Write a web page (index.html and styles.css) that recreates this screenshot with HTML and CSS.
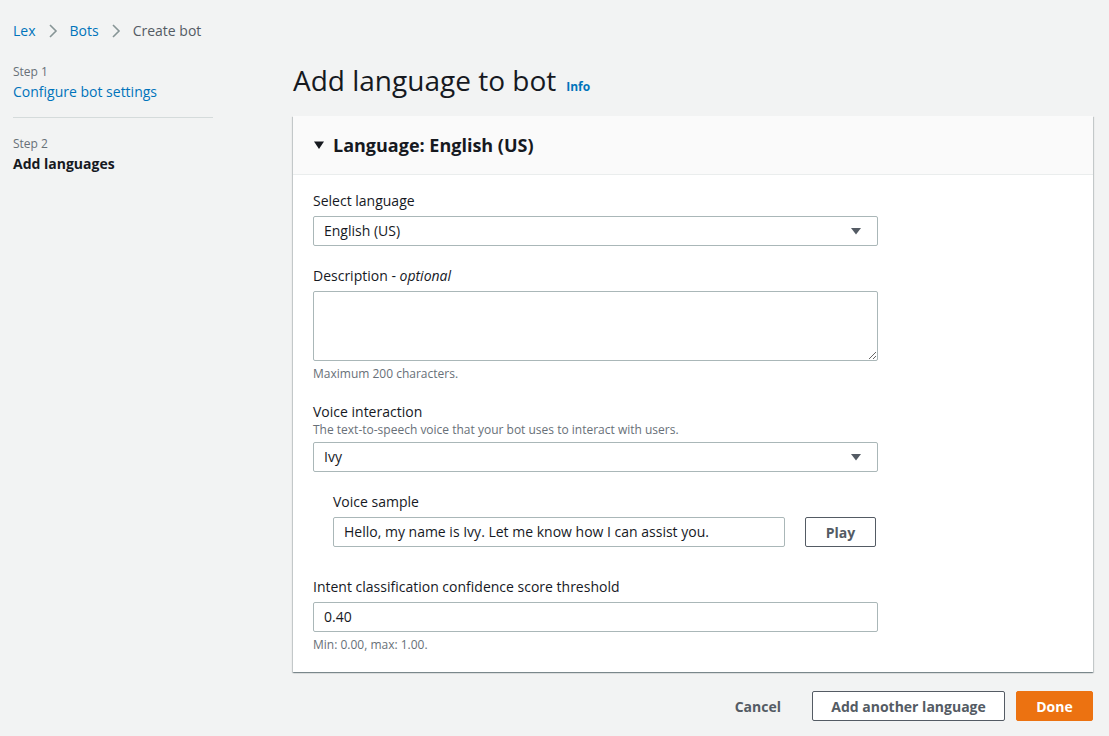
FILE: index.html
```html
<!DOCTYPE html>
<html lang="en">
<head>
<meta charset="utf-8">
<title>Add language to bot</title>
<link rel="stylesheet" href="styles.css">
</head>
<body>
<nav class="crumbs">
  <a class="crumb-link" href="#">Lex</a>
  <svg class="chev" width="10" height="16" viewBox="0 0 10 16"><polyline points="2,2 8,8 2,14" fill="none" stroke="#879596" stroke-width="1.6"/></svg>
  <a class="crumb-link" href="#">Bots</a>
  <svg class="chev" width="10" height="16" viewBox="0 0 10 16"><polyline points="2,2 8,8 2,14" fill="none" stroke="#879596" stroke-width="1.6"/></svg>
  <span class="crumb-current">Create bot</span>
</nav>
<div class="layout">
  <aside class="steps">
    <div class="step">
      <div class="step-num">Step 1</div>
      <a class="step-link" href="#">Configure bot settings</a>
    </div>
    <div class="step-divider"></div>
    <div class="step">
      <div class="step-num">Step 2</div>
      <div class="step-active">Add languages</div>
    </div>
  </aside>
  <main class="main">
    <h1 class="title">Add language to bot <a class="info" href="#">Info</a></h1>
    <section class="panel">
      <header class="panel-head">
        <svg class="caret-down" width="12" height="10" viewBox="0 0 12 10"><polygon points="1,1.5 11,1.5 6,9" fill="#16191f"/></svg>
        <span>Language: English (US)</span>
      </header>
      <div class="panel-body">
        <div class="field">
          <div class="label">Select language</div>
          <div class="select">
            <span>English (US)</span>
            <svg width="12" height="10" viewBox="0 0 12 10"><polygon points="1,2 11,2 6,8.5" fill="#545b64"/></svg>
          </div>
        </div>
        <div class="field">
          <div class="label">Description - <i>optional</i></div>
          <textarea class="textarea"></textarea>
          <div class="hint">Maximum 200 characters.</div>
        </div>
        <div class="field">
          <div class="label">Voice interaction</div>
          <div class="desc">The text-to-speech voice that your bot uses to interact with users.</div>
          <div class="select">
            <span>Ivy</span>
            <svg width="12" height="10" viewBox="0 0 12 10"><polygon points="1,2 11,2 6,8.5" fill="#545b64"/></svg>
          </div>
        </div>
        <div class="sample">
          <div class="label">Voice sample</div>
          <div class="sample-row">
            <div class="input sample-input">Hello, my name is Ivy. Let me know how I can assist you.</div>
            <button class="btn btn-play">Play</button>
          </div>
        </div>
        <div class="field">
          <div class="label">Intent classification confidence score threshold</div>
          <div class="input">0.40</div>
          <div class="hint">Min: 0.00, max: 1.00.</div>
        </div>
      </div>
    </section>
    <div class="actions">
      <button class="btn-link">Cancel</button>
      <button class="btn btn-normal">Add another language</button>
      <button class="btn btn-primary">Done</button>
    </div>
  </main>
</div>
</body>
</html>
```
FILE: styles.css
```css
* { box-sizing: border-box; }
body {
  margin: 0;
  background: #f2f3f3;
  font-family: "Open Sans", "Noto Sans", sans-serif;
  font-size: 14px;
  color: #16191f;
  width: 1109px;
  height: 736px;
  overflow: hidden;
}
a { text-decoration: none; }
.crumbs {
  display: flex;
  align-items: center;
  padding: 21px 0 0 13px;
  height: 41px;
  line-height: 20px;
  gap: 12px;
}
.crumb-link { color: #0073bb; }
.crumb-current { color: #545b64; }
.chev { display: block; }
.layout {
  display: flex;
  padding-left: 13px;
}
.steps {
  width: 200px;
  flex: none;
  padding-top: 23px;
}
.step-num {
  font-size: 12px;
  line-height: 16px;
  color: #687078;
}
.step-link {
  display: block;
  color: #0073bb;
  line-height: 20px;
  margin-top: 2px;
}
.step-divider {
  height: 1px;
  background: #d5dbdb;
  margin: 15px 0 18px;
}
.step-active {
  font-weight: 700;
  line-height: 20px;
  margin-top: 2px;
}
.main {
  margin-left: 80px;
  width: 800px;
}
.title {
  margin: 21px 0 0;
  height: 54px;
  font-size: 28px;
  font-weight: 400;
  line-height: 36px;
  display: flex;
  align-items: baseline;
}
.info {
  font-size: 12px;
  font-weight: 700;
  color: #0073bb;
  margin-left: 10px;
}
.panel {
  background: #fff;
  box-shadow: 0 1px 1px 0 rgba(0,28,36,.3), 1px 1px 1px 0 rgba(0,28,36,.15), -1px 1px 1px 0 rgba(0,28,36,.15);
}
.panel-head {
  background: #fafafa;
  border-bottom: 1px solid #eaeded;
  height: 59px;
  padding: 0 20px;
  display: flex;
  align-items: center;
  gap: 8px;
  font-size: 18px;
  font-weight: 700;
}
.caret-down { display: block; }
.panel-body {
  padding: 16px 20px 19px;
  width: 605px;
}
.field + .field { margin-top: 20px; }
.label {
  line-height: 20px;
  margin-bottom: 5px;
}
.desc {
  font-size: 12px;
  line-height: 16px;
  color: #687078;
  margin-top: -5px;
  margin-bottom: 4px;
}
.select, .input {
  height: 30px;
  border: 1px solid #aab7b8;
  border-radius: 2px;
  background: #fff;
  display: flex;
  align-items: center;
  justify-content: space-between;
  padding: 0 15px 0 10px;
  line-height: 20px;
}
.select svg { display: block; }
.textarea {
  display: block;
  width: 100%;
  height: 70px;
  border: 1px solid #aab7b8;
  border-radius: 2px;
  margin: 0;
  font: inherit;
}
.hint {
  font-size: 12px;
  line-height: 16px;
  color: #687078;
  margin-top: 5px;
}
.sample {
  padding: 20px 0 30px 20px;
}
.sample-row {
  display: flex;
  align-items: center;
  gap: 20px;
}
.sample-input {
  width: 452px;
  flex: none;
}
.btn {
  height: 30px;
  border-radius: 2px;
  font: inherit;
  font-weight: 700;
  padding: 0;
  white-space: nowrap;
  cursor: pointer;
}
.btn-play {
  width: 71px;
  background: #fff;
  border: 1px solid #545b64;
  color: #545b64;
}
.actions {
  display: flex;
  justify-content: flex-end;
  align-items: center;
  margin-top: 19px;
  gap: 11px;
}
.btn-link {
  background: none;
  border: none;
  font: inherit;
  font-weight: 700;
  color: #545b64;
  padding: 0 20px;
  height: 30px;
}
.btn-normal {
  width: 193px;
  background: #fff;
  border: 1px solid #545b64;
  color: #545b64;
}
.btn-primary {
  width: 77px;
  background: #ec7211;
  border: 1px solid #ec7211;
  color: #fff;
}
```
